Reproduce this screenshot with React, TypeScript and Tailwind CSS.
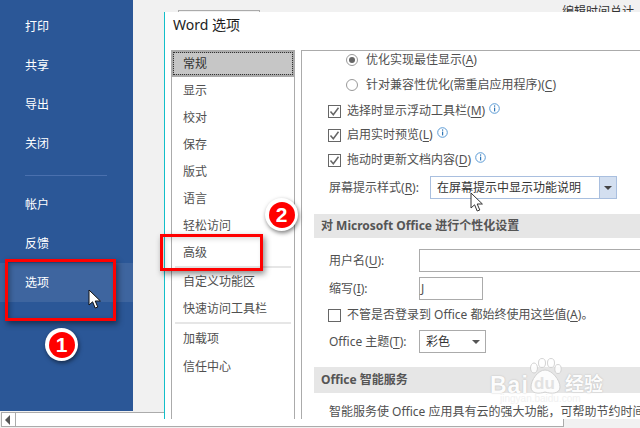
const FONT = "font-['Noto_Sans','Noto_Sans_CJK_SC',sans-serif]";

const topMenu = ["打印", "共享", "导出", "关闭"];
const lowerMenu = ["帐户", "反馈", "选项"];

function Key({ k }: { k: string }) {
  return (
    <span>
      (<span className="underline underline-offset-2">{k}</span>)
    </span>
  );
}

function Info() {
  return (
    <svg width="11" height="11" viewBox="0 0 11 11" className="mb-[5px] ml-[4px] shrink-0">
      <circle cx="5.5" cy="5.5" r="4.8" fill="#fff" stroke="#5b9bd5" />
      <rect x="5" y="2.4" width="1.2" height="1.3" fill="#2e75b6" />
      <rect x="5" y="4.6" width="1.2" height="3.8" fill="#2e75b6" />
    </svg>
  );
}

function CheckBox({ checked }: { checked?: boolean }) {
  return (
    <span className="flex h-[13px] w-[13px] shrink-0 items-center justify-center border border-[#666] bg-white">
      {checked ? (
        <svg width="11" height="11" viewBox="0 0 11 11">
          <path d="M1.5 5.5 L4.3 8.8 L9.5 1.8" fill="none" stroke="#666" strokeWidth="1.5" />
        </svg>
      ) : null}
    </span>
  );
}

function CheckRow({ className, checked, info, children }: { className: string; checked?: boolean; info?: boolean; children: React.ReactNode }) {
  return (
    <div className={`ml-[26px] flex h-[18px] items-center ${className}`}>
      <CheckBox checked={checked} />
      <span className="ml-[6px] whitespace-nowrap">{children}</span>
      {info ? <Info /> : null}
    </div>
  );
}

function RadioRow({ className, checked, children }: { className: string; checked?: boolean; children: React.ReactNode }) {
  return (
    <div className={`ml-[44px] flex h-[18px] items-center ${className}`}>
      <span className="flex h-[12px] w-[12px] shrink-0 items-center justify-center rounded-full border border-[#999] bg-white">
        {checked ? <span className="h-[6px] w-[6px] rounded-full bg-[#666]" /> : null}
      </span>
      <span className="ml-[8px] whitespace-nowrap">{children}</span>
    </div>
  );
}

function NavItem({ label, className = "" }: { label: string; className?: string }) {
  return <div className={`flex h-[27px] items-center pl-[11px] ${className}`}>{label}</div>;
}

function NavDivider() {
  return <div className="mx-[3px] h-[2px] bg-[#e6e6e6]" />;
}

function Badge({ n, className }: { n: string; className: string }) {
  return (
    <div className={`absolute flex h-[33px] w-[33px] items-center justify-center rounded-full bg-white shadow-[1px_2px_4px_rgba(0,0,0,0.5)] ${className}`}>
      <div className="flex h-[26px] w-[26px] items-center justify-center rounded-full bg-[#f00] font-['Liberation_Sans',sans-serif] text-[21px] font-bold leading-none text-white">
        {n}
      </div>
    </div>
  );
}

function Cursor({ className, dark }: { className: string; dark?: boolean }) {
  return (
    <svg width="14" height="21" viewBox="0 0 14 21" className={`absolute ${className}`}>
      <path
        d="M1 1 L1 16 L4.6 12.8 L7.2 19 L9.8 18 L7.2 12 L12.4 12 Z"
        fill="#fff"
        stroke={dark ? "#333" : "#111"}
        strokeWidth="1"
        strokeLinejoin="round"
      />
    </svg>
  );
}

function Watermark() {
  return (
    <div className="pointer-events-none absolute left-[490px] top-[358px] h-[50px] w-[120px] text-white opacity-90">
      <svg width="34" height="38" viewBox="0 0 34 38" className="absolute left-[38px] top-0">
        <g fill="#fff" stroke="#d0d0d0" strokeWidth="1">
          <ellipse cx="6" cy="10" rx="3.5" ry="5" />
          <ellipse cx="14" cy="5" rx="3.5" ry="4.5" />
          <ellipse cx="23" cy="5" rx="3.5" ry="4.5" />
          <ellipse cx="30" cy="11" rx="3.2" ry="4.5" />
          <path d="M17 12 C10 12 3 22 3 29 C3 36 11 36 17 34 C23 36 32 36 32 29 C32 22 24 12 17 12 Z" />
        </g>
      </svg>
      <span className="absolute left-0 top-[16px] font-['Liberation_Sans',sans-serif] text-[23px] font-bold leading-none tracking-[1px] [text-shadow:0_0_1.5px_#aaa]">
        Bai
      </span>
      <span className="absolute left-[44px] top-[17px] font-['Liberation_Sans',sans-serif] text-[17px] font-bold leading-none text-[#e2e2e2]">
        du
      </span>
      <span className="absolute left-[75px] top-[17px] text-[19px] font-bold leading-none [text-shadow:0_0_1.5px_#aaa]">
        经验
      </span>
      <span className="absolute left-[10px] top-[36px] whitespace-nowrap font-['Liberation_Sans',sans-serif] text-[10px] text-[#f0f0f0]">
        jingyan.baidu.com
      </span>
    </div>
  );
}

export default function App() {
  return (
    <div className={`relative h-[428px] w-[640px] overflow-hidden bg-[#f1f1f1] text-[12px] leading-none text-[#505050] ${FONT}`}>
      <div className="flex h-[412px] items-start">
        <aside className="h-[411px] w-[133px] bg-[#2b5797] pt-[7px] text-white">
          {topMenu.map((item) => (
            <div key={item} className="flex h-[39px] items-center pl-[25px]">{item}</div>
          ))}
          <div className="ml-[25px] mt-[12px] h-px w-[82px] bg-[#4a70ae]" />
          <div className="mt-[9px]">
            {lowerMenu.map((item) => (
              <div key={item} className={`flex h-[39px] items-center pl-[25px] ${item === "选项" ? "bg-[#3e659f]" : ""}`}>
                {item}
              </div>
            ))}
          </div>
        </aside>
        <div className="flex h-[12px] flex-1 overflow-hidden">
          <div className="ml-[45px] mt-[10px] h-[10px] w-[82px] border border-[#ababab]" />
          <div className="ml-[302px] mt-[6px] whitespace-nowrap text-[#333]">编辑时间总计</div>
        </div>
      </div>

      {/* bottom scrollbar of the backstage view */}
      <div className="ml-[1px] flex h-[15px] w-[563px] border-y border-r border-[#ababab] bg-white">
        <div className="flex w-[15px] items-center justify-center border-x border-[#ababab] pr-[2px]">
          <span className="h-0 w-0 border-y-[5px] border-r-[5px] border-y-transparent border-r-[#555]" />
        </div>
      </div>

      {/* options dialog */}
      <div className="absolute left-[164px] top-[12px] h-[407px] w-[476px] border-l border-[#12bfc9] bg-white">
        <div className="flex h-[38px] items-center pb-[12px] pl-[8px] text-[14px] text-[#222]">Word 选项</div>
        <div className="flex h-[369px]">
          <nav className="ml-[6px] w-[124px] border-x border-[#ababab]">
            <div className="-mx-px flex h-[27px] items-center border-[3px] border-[#ababab] bg-[#c6c6c6] text-[#333] outline-1 -outline-offset-3 outline-dotted outline-[#333]">
              <span className="pl-[9px]">常规</span>
            </div>
            <NavItem label="显示" />
            <NavItem label="校对" />
            <NavItem label="保存" />
            <NavItem label="版式" />
            <NavItem label="语言" />
            <NavItem label="轻松访问" />
            <NavItem label="高级" />
            <NavDivider />
            <NavItem label="自定义功能区" />
            <NavItem label="快速访问工具栏" />
            <NavDivider />
            <NavItem label="加载项" className="mt-px" />
            <NavItem label="信任中心" className="mt-px" />
          </nav>
          <main className="ml-[6px] flex-1 overflow-hidden border-l border-t border-[#ababab]">
            <RadioRow className="" checked>
              优化实现最佳显示<Key k="A" />
            </RadioRow>
            <RadioRow className="mt-[7px]">
              针对兼容性优化(需重启应用程序)<Key k="C" />
            </RadioRow>
            <CheckRow className="mt-[8px]" checked info>
              选择时显示浮动工具栏<Key k="M" />
            </CheckRow>
            <CheckRow className="mt-[6px]" checked info>
              启用实时预览<Key k="L" />
            </CheckRow>
            <CheckRow className="mt-[7px]" checked info>
              拖动时更新文档内容<Key k="D" />
            </CheckRow>
            <div className="mt-[7px] flex h-[23px] items-center pl-[27px]">
              <span className="w-[101px] shrink-0 whitespace-nowrap">
                屏幕提示样式<Key k="R" />:
              </span>
              <div className="flex h-[23px] w-[187px] shrink-0 items-center border border-[#a9bfdf] text-[#333]">
                <span className="flex-1 pl-[6px]">在屏幕提示中显示功能说明</span>
                <span className="flex h-full w-[17px] items-center justify-center border-l border-[#a9bfdf] bg-[#d3dff0]">
                  <span className="h-0 w-0 border-x-[4px] border-t-[4px] border-x-transparent border-t-[#444]" />
                </span>
              </div>
            </div>
            <div className="ml-[12px] mt-[15px] flex h-[24px] items-center whitespace-nowrap bg-[#e6e6e6] pl-[7px] font-bold text-[#555]">
              对 Microsoft Office 进行个性化设置
            </div>
            <div className="mt-[11px] flex h-[23px] items-center pl-[27px]">
              <span className="w-[90px] shrink-0 whitespace-nowrap">
                用户名<Key k="U" />:
              </span>
              <div className="h-[23px] min-w-0 flex-1 border-y border-l border-[#ababab]" />
            </div>
            <div className="mt-[5px] flex h-[23px] items-center pl-[27px]">
              <span className="w-[90px] shrink-0 whitespace-nowrap">
                缩写<Key k="I" />:
              </span>
              <div className="flex h-[23px] w-[64px] items-center border border-[#ababab] pl-[1px]">J</div>
            </div>
            <CheckRow className="mt-[6px]">
              不管是否登录到 Office 都始终使用这些值<Key k="A" />。
            </CheckRow>
            <div className="mt-[6px] flex h-[23px] items-center pl-[27px]">
              <span className="w-[90px] shrink-0 whitespace-nowrap">
                Office 主题<Key k="T" />:
              </span>
              <div className="flex h-[23px] w-[67px] items-center justify-between border border-[#ababab] pl-[6px] pr-[5px] text-[#333]">
                彩色
                <span className="h-0 w-0 border-x-[4px] border-t-[4px] border-x-transparent border-t-[#555]" />
              </div>
            </div>
            <div className="ml-[12px] mt-[14px] flex h-[26px] items-center whitespace-nowrap bg-[#e6e6e6] pl-[7px] font-bold text-[#555]">
              Office 智能服务
            </div>
            <div className="mt-[10px] whitespace-nowrap pl-[27px] leading-[18px]">
              智能服务使 Office 应用具有云的强大功能，可帮助节约时间
            </div>
          </main>
        </div>
      </div>

      <Watermark />

      {/* tutorial annotations */}
      <div className="absolute left-[5px] top-[259px] h-[62px] w-[111px] border-[3px] border-[#f00] shadow-[2px_3px_6px_rgba(0,0,0,0.45),inset_2px_2px_5px_rgba(0,0,0,0.3)]" />
      <div className="absolute left-[160px] top-[234px] h-[37px] w-[103px] border-[3px] border-[#f00] shadow-[2px_3px_6px_rgba(0,0,0,0.45),inset_2px_2px_5px_rgba(0,0,0,0.15)]" />
      <Badge n="1" className="left-[45px] top-[328px]" />
      <Badge n="2" className="left-[265px] top-[198px]" />
      <Cursor className="left-[88px] top-[289px]" />
      <Cursor className="left-[470px] top-[192px]" dark />
    </div>
  );
}
